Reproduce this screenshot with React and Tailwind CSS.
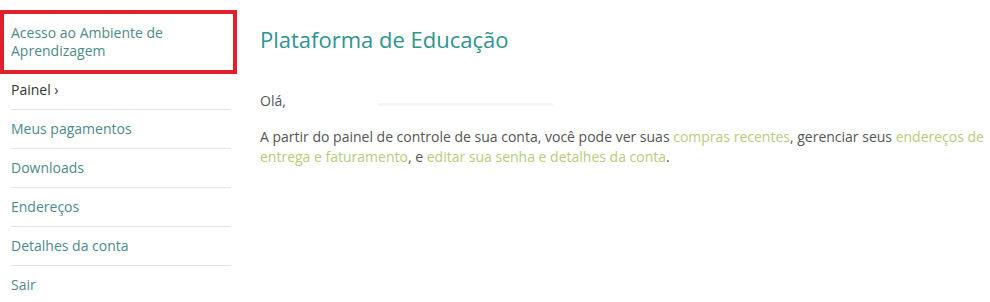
export default function App() {
  const items = ["Meus pagamentos", "Downloads", "Endereços", "Detalhes da conta", "Sair"];
  return (
    <div className="w-[990px] h-[302px] bg-white flex overflow-hidden" style={{ fontFamily: '"Open Sans", sans-serif' }}>
      <aside className="w-[237px] shrink-0 pt-[10px]">
        <div className="border-4 border-[#e0212b] pl-[7px] py-[10px] text-[14px] leading-[18px] text-[#4d8a8a]">
          Acesso ao Ambiente de<br />Aprendizagem
        </div>
        <ul className="ml-[11px] w-[220px] text-[14px] leading-[20px]">
          <li className="pt-[6px] pb-[9px] border-b border-[#e3e3e3] text-[#333]">Painel ›</li>
          {items.map((t) => (
            <li key={t} className="py-[9px] border-b border-[#e3e3e3] last:border-b-0 text-[#4d8a8a]">{t}</li>
          ))}
        </ul>
      </aside>
      <main className="ml-[23px] pt-[24px] text-[14px] leading-[20px] text-[#555]">
        <h1 className="text-[22px] leading-[30px] text-[#2f948f] font-normal">Plataforma de Educação</h1>
        <p className="mt-[37px] flex items-center">
          Olá,
          <span className="ml-[92px] mt-[6px] h-[3px] w-[175px] bg-[#f5f5f5] rounded"></span>
        </p>
        <p className="mt-[16px] w-[728px]">
          A partir do painel de controle de sua conta, você pode ver suas{" "}
          <span className="text-[#b9cb7c]">compras recentes</span>, gerenciar seus{" "}
          <span className="text-[#b9cb7c]">endereços de entrega e faturamento</span>, e{" "}
          <span className="text-[#b9cb7c]">editar sua senha e detalhes da conta</span>.
        </p>
      </main>
    </div>
  );
}
